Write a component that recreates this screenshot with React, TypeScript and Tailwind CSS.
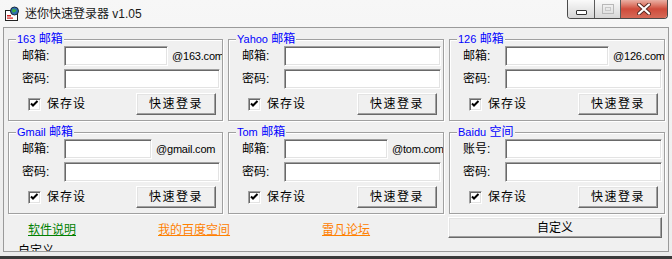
import React from 'react';

const font = "font-['Liberation_Sans','Noto_Sans_CJK_SC',sans-serif]";

interface GroupArgs {
    name: string,
    kind: string,
    user: string,
    suffix?: string,
    inputW?: string,
}

const groups: GroupArgs[] = [
    { name: '163', kind: '邮箱', user: '邮箱:', suffix: '@163.com', inputW: 'w-[104px]' },
    { name: 'Yahoo', kind: '邮箱', user: '邮箱:' },
    { name: '126', kind: '邮箱', user: '邮箱:', suffix: '@126.com', inputW: 'w-[104px]' },
    { name: 'Gmail', kind: '邮箱', user: '邮箱:', suffix: '@gmail.com', inputW: 'w-[88px]' },
    { name: 'Tom', kind: '邮箱', user: '邮箱:', suffix: '@tom.com', inputW: 'w-[104px]' },
    { name: 'Baidu', kind: '空间', user: '账号:' },
];

const sunken = 'bg-white border border-t-[#a0a0a0] border-l-[#a0a0a0] border-r-white border-b-white shadow-[inset_1px_1px_0_#696969,inset_-1px_-1px_0_#e3e3e3]';
const raised = 'bg-[#f0f0f0] border border-t-white border-l-white border-r-[#696969] border-b-[#696969] shadow-[inset_-1px_-1px_0_#a0a0a0,inset_1px_1px_0_#e3e3e3]';

function Checkbox() {
    return <div className={`w-[13px] h-[13px] shrink-0 ${sunken}`}>
        <svg width="11" height="11" viewBox="0 0 11 11">
            <path d="M2 4.5 L4 6.5 L8.5 2" stroke="#000" strokeWidth="2" fill="none" />
        </svg>
    </div>;
}

function Group({ name, kind, user, suffix, inputW }: GroupArgs) {
    return <fieldset className="h-[89px] min-w-0 p-0 m-0 border border-[#a0a0a0] shadow-[inset_1px_1px_0_#fff,1px_1px_0_#fff]">
        <legend className="ml-[7px] px-[1px] bg-[#f0f0f0] text-[#0000ff] text-[12px] leading-[14px]">
            <span className="text-[11px]">{name}</span> {kind}
        </legend>
        <div className="pl-[13px] pr-[2px] flex flex-col text-[12px] leading-[14px]">
            <div className="flex items-center h-[20px]">
                <span className="w-[42px] shrink-0">{user}</span>
                {suffix ? <>
                    <div className={`${inputW} h-[20px] shrink-0 ${sunken}`}></div>
                    <span className="ml-[4px] -mr-[2px] flex-1 min-w-0 overflow-hidden whitespace-nowrap text-[11px] tracking-[-0.2px]">{suffix}</span>
                </> : <div className={`flex-1 h-[20px] ${sunken}`}></div>}
            </div>
            <div className="flex items-center h-[20px] mt-[3px]">
                <span className="w-[42px] shrink-0">密码:</span>
                <div className={`flex-1 h-[20px] ${sunken}`}></div>
            </div>
            <div className="flex items-center h-[22px] mt-[4px]">
                <div className="ml-[6px]"><Checkbox /></div>
                <span className="ml-[6px] tracking-[1px]">保存设</span>
                <button className={`ml-auto mr-[4px] w-[80px] h-[22px] text-[12px] tracking-[1.5px] ${raised}`}>快速登录</button>
            </div>
        </div>
    </fieldset>;
}

function CaptionButtons() {
    return <div className="flex h-[19px] ml-auto mr-[4px] border border-t-0 border-[#4a4a4a] rounded-b-[4px] overflow-hidden">
        <div className="w-[27px] h-full flex items-end justify-center pb-[3px] bg-gradient-to-b from-[#fafafa] to-[#d6d6d6] border-r border-[#5a5a5a]">
            <div className="w-[11px] h-[5px] bg-white border border-[#333] rounded-[1px]"></div>
        </div>
        <div className="w-[26px] h-full flex items-center justify-center bg-gradient-to-b from-[#fafafa] to-[#d6d6d6] border-r border-[#5a5a5a]">
            <div className="w-[12px] h-[10px] border border-[#b8b8b8] flex items-center justify-center">
                <div className="w-[6px] h-[4px] border border-[#c8c8c8]"></div>
            </div>
        </div>
        <div className="w-[46px] h-full flex items-center justify-center bg-gradient-to-b from-[#e9b0a4] via-[#cf4b3b] to-[#d56a58]">
            <svg width="14" height="12" viewBox="0 0 14 12">
                <path d="M2 1.5 L12 10.5 M12 1.5 L2 10.5" stroke="#5a2a22" strokeWidth="4" strokeLinecap="round" />
                <path d="M2 1.5 L12 10.5 M12 1.5 L2 10.5" stroke="#fff" strokeWidth="2.2" strokeLinecap="round" />
            </svg>
        </div>
    </div>;
}

function AppIcon() {
    return <svg width="16" height="16" viewBox="0 0 16 16" className="shrink-0">
        <rect x="1.5" y="4.5" width="12" height="10" fill="#fff" stroke="#222" />
        <rect x="3" y="9" width="4" height="1.5" fill="#d42020" />
        <rect x="3" y="11.5" width="6" height="1.2" fill="#d42020" />
        <circle cx="10.5" cy="5" r="4" fill="#2f6fb3" stroke="#1a2a3a" />
        <path d="M8 3.5 Q10.5 2 12.5 4.5 Q11 7 8.5 6.5 Z" fill="#3fae3f" />
    </svg>;
}

export default function App() {
    return <div className={`w-[672px] h-[259px] overflow-hidden bg-gradient-to-b from-[#f7f7f7] to-[#ececec] border-b-[3px] border-[#3a3a3a] text-black ${font}`}>
        <div className="h-[27px] flex items-start">
            <div className="flex items-center h-[27px] pl-[4px]">
                <AppIcon />
                <span className="ml-[5px] text-[12px] text-[#1a1a1a]">迷你快速登录器 v1.05</span>
            </div>
            <CaptionButtons />
        </div>
        <div className="mx-[3px] h-[225px] overflow-hidden bg-[#f0f0f0] border border-[#9a9a9a]">
            <div className="pl-[4px] pt-[4px] grid grid-cols-[215px_216px_216px] gap-x-[5px] gap-y-[4px]">
                {groups.map(g => <Group key={g.name} {...g} />)}
            </div>
            <div className="mt-[3px] h-[21px] flex items-end text-[12px] leading-[16px]">
                <a className="ml-[24px] text-[#008000] underline">软件说明</a>
                <a className="ml-[82px] text-[#ff8000] underline">我的百度空间</a>
                <a className="ml-[92px] text-[#ff8000] underline">雷凡论坛</a>
                <button className={`ml-auto mr-[6px] w-[214px] h-[21px] text-[12px] ${raised}`}>自定义</button>
            </div>
            <div className="mt-[5px] ml-[14px] text-[12px] leading-[16px]">自定义</div>
        </div>
    </div>;
}
